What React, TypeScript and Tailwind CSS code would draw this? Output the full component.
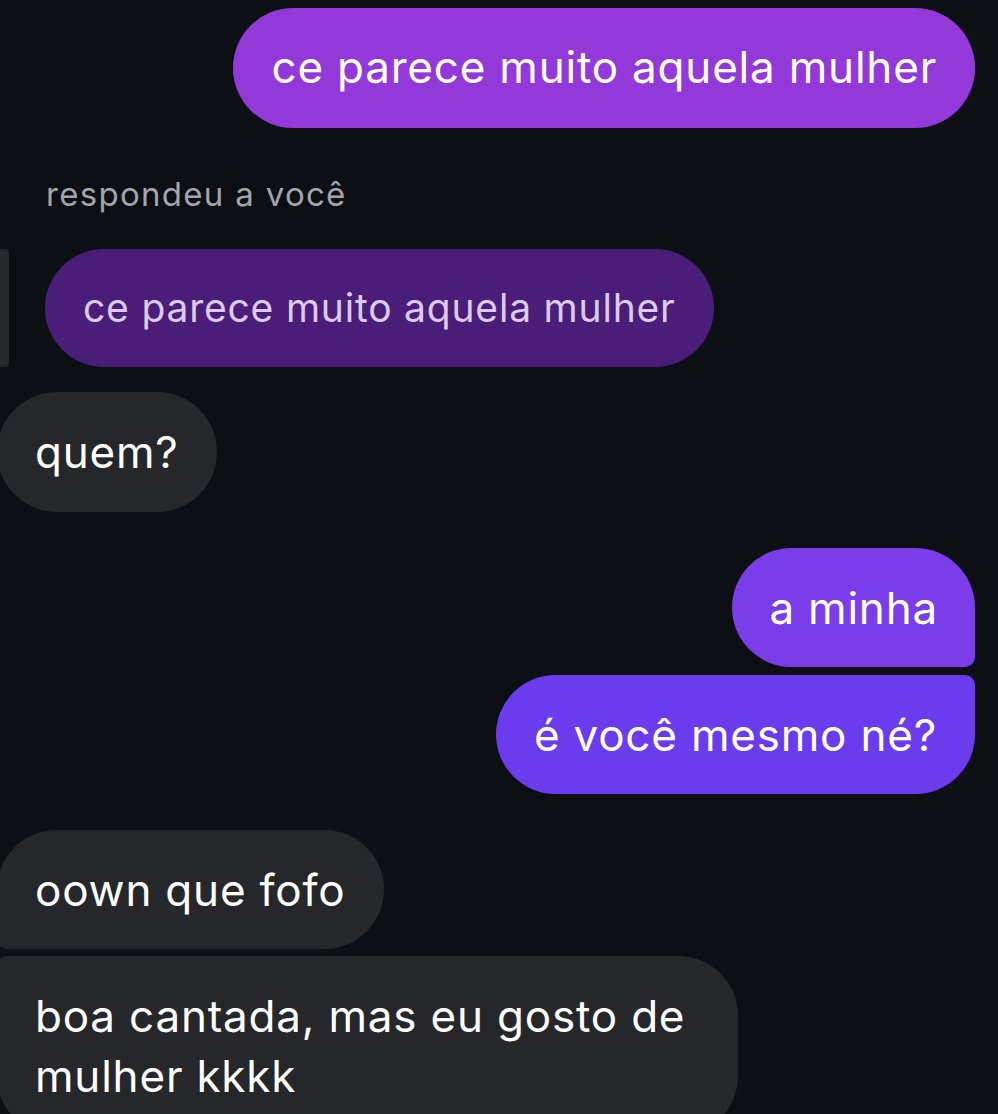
import React from "react";

const font = { fontFamily: "Inter, 'Noto Sans', 'Liberation Sans', sans-serif" };

export default function App() {
  return (
    <div
      className="w-[998px] h-[1114px] overflow-hidden bg-[#0c0f13] text-white flex flex-col"
      style={font}
    >
      <div className="flex justify-end pr-[23px] pt-[8px]">
        <div className="rounded-[60px] bg-[#9439d9] px-[38px] h-[120px] flex items-center text-[44px] tracking-[0.8px] leading-[60px] text-white">
          <span className="-mt-[2px]">ce parece muito aquela mulher</span>
        </div>
      </div>

      <div className="pl-[46px] mt-[49px] text-[33px] tracking-[1.3px] leading-[34px] text-[#a2a5ab]">
        respondeu a você
      </div>

      <div className="flex items-stretch mt-[38px] gap-[36px]">
        <div className="w-[9px] rounded-r-[4px] bg-[#26282c]" />
        <div className="rounded-[60px] bg-[#4a1e78] px-[38px] h-[118px] flex items-center text-[39px] tracking-[0.8px] leading-[50px] text-[#dccbf0]">
          ce parece muito aquela mulher
        </div>
      </div>

      <div className="flex mt-[25px]">
        <div className="-ml-[3px] rounded-[60px] bg-[#25272b] pl-[38px] pr-[38px] h-[120px] flex items-center text-[44px] tracking-[0.8px] leading-[60px] text-white">
          quem?
        </div>
      </div>

      <div className="flex flex-col items-end pr-[23px] mt-[36px] gap-[8px]">
        <div className="rounded-[60px] rounded-br-[10px] bg-[#7a3de9] px-[37px] h-[119px] flex items-center text-[44px] tracking-[0.8px] leading-[60px] text-white">
          a minha
        </div>
        <div className="rounded-[60px] rounded-tr-[10px] bg-[#6b3ced] px-[38px] h-[119px] flex items-center text-[44px] tracking-[0.8px] leading-[60px] text-white">
          é você mesmo né?
        </div>
      </div>

      <div className="flex flex-col items-start mt-[36px] gap-[7px]">
        <div className="-ml-[3px] rounded-[60px] rounded-bl-[10px] bg-[#25272b] px-[38px] h-[119px] flex items-center text-[44px] tracking-[0.8px] leading-[60px] text-white">
          oown que fofo
        </div>
        <div className="-ml-[3px] rounded-[60px] rounded-tl-[10px] bg-[#25272b] pl-[38px] pr-[36px] py-[30px] w-[741px] text-[44px] tracking-[0.8px] leading-[60px] text-white">
          boa cantada, mas eu gosto de mulher kkkk
        </div>
      </div>
    </div>
  );
}
